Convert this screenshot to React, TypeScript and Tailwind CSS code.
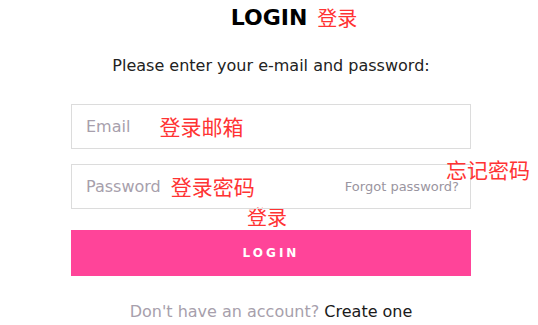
const FONT = "font-['DejaVu_Sans','Noto_Sans_CJK_SC',sans-serif]"
const CJK = "font-['Noto_Sans_CJK_SC',sans-serif] text-[#ff3333] whitespace-nowrap"

export default function App() {
  return (
    <div className={`relative h-[325px] w-[538px] overflow-hidden bg-white ${FONT}`}>
      <div className="ml-[71px] flex w-[400px] flex-col">
        <div className="flex h-[34px] items-center justify-center pt-[1px]">
          <h1 className="ml-[46px] text-[22px] font-bold leading-none text-black">LOGIN</h1>
          <span className={`ml-[10px] text-[20px] leading-none ${CJK}`}>登录</span>
        </div>
        <p className="mt-[22px] text-center text-[16px] leading-[20px] text-[#222]">
          Please enter your e-mail and password:
        </p>
        <div className="mt-[28px] flex h-[45px] items-center border border-[#dcdcdc] px-[14px]">
          <span className="text-[16px] text-[#a79fac]">Email</span>
          <span className={`ml-[29px] text-[21px] ${CJK}`}>登录邮箱</span>
        </div>
        <div className="relative mt-[15px] flex h-[45px] items-center border border-[#dcdcdc] pl-[14px] pr-[11px]">
          <span className="text-[16px] text-[#a79fac]">Password</span>
          <span className={`ml-[10px] text-[21px] ${CJK}`}>登录密码</span>
          <span className="ml-auto text-[13px] text-[#9a95a0]">Forgot password?</span>
          <span className={`absolute left-[374px] top-[-6px] text-[21px] leading-none ${CJK}`}>忘记密码</span>
        </div>
        <div className="flex h-[21px] items-start justify-center pr-[8px]">
          <span className={`-mt-[2px] text-[20px] leading-none ${CJK}`}>登录</span>
        </div>
        <button className="flex h-[46px] items-center justify-center bg-[#ff4499] text-[12px] font-bold tracking-[0.25em] text-white">
          LOGIN
        </button>
        <p className="mt-[24px] text-center text-[16px] text-[#a79fac]">
          Don't have an account? <span className="text-[#1a1a1a]">Create one</span>
        </p>
      </div>
    </div>
  )
}
